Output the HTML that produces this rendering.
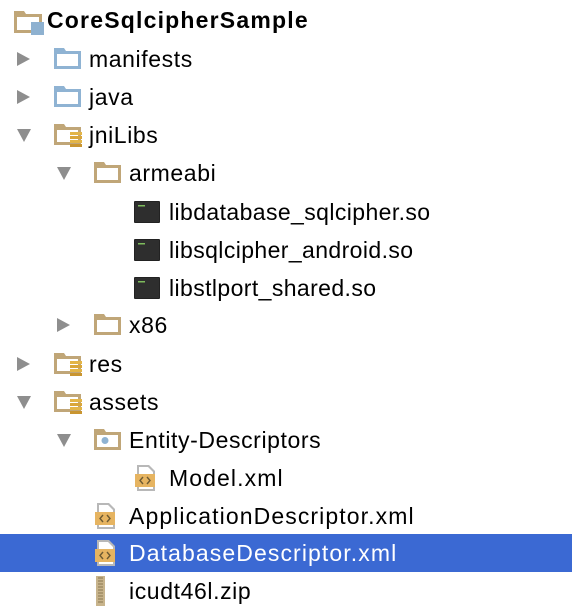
<!DOCTYPE html>
<html><head><meta charset="utf-8"><style>
body{margin:0;width:572px;height:616px;background:#fff;position:relative;overflow:hidden;font-family:"Liberation Sans",sans-serif;font-size:23px;letter-spacing:0.6px;color:#000}
.r{position:absolute;left:0;width:572px;height:38px}
.t{position:absolute;top:6px;line-height:26px;white-space:nowrap}
svg{position:absolute}
.sel{background:#3b69d3;color:#fff}
.w{letter-spacing:1.1px}
</style></head><body>
<svg width="0" height="0" style="position:absolute">
<defs>
<g id="ft"><path d="M0 0H10L12 3H27V21H0Z" fill="#c0a678"/><rect x="3" y="6" width="21" height="12" fill="#fff"/></g>
<g id="fb"><path d="M0 0H10L12 3H27V21H0Z" fill="#8fb3d3"/><rect x="3" y="6" width="21" height="12" fill="#fff"/></g>
<g id="db"><rect x="0" y="0" width="12" height="3" fill="#e3b547"/><rect x="0" y="4" width="12" height="3" fill="#d9a63a"/><rect x="0" y="8" width="12" height="3" fill="#e3b547"/><rect x="0" y="12" width="12" height="3" fill="#c99530"/></g>
<g id="so"><rect x="0" y="0" width="26" height="22" rx="1" fill="#222"/><rect x="1" y="1" width="24" height="20" fill="#2e2e2e"/><rect x="4" y="4" width="7" height="1.5" fill="#7dbb5c"/></g>
<g id="xml"><path d="M2 0H14L20 6V26H2Z" fill="#b8b8b8"/><path d="M4 2H13L18 7V24H4Z" fill="#fff"/><rect x="0" y="9" width="20" height="13" fill="#e6b461"/><path d="M8 12L5 15.5L8 19M12 12L15 15.5L12 19" stroke="#6d5a33" stroke-width="1.4" fill="none"/></g>
<g id="tr"><path d="M0 0L13 7L0 14Z" fill="#8e8e8e"/></g>
<g id="td"><path d="M0 0H14L7 13Z" fill="#8e8e8e"/></g>
</defs></svg>

<div class="r" style="top:1px">
<svg x="0" width="50" height="38"><path d="M14 10H24L26 13H42V32H14Z" fill="#c0a678"/><rect x="17" y="16" width="22" height="13" fill="#fff"/><rect x="31" y="21" width="13" height="13" fill="#8eb1d0"/></svg>
<div class="t" style="left:47px;font-weight:bold;letter-spacing:1.2px">CoreSqlcipherSample</div></div>

<div class="r" style="top:40px"><svg width="200" height="38"><use href="#tr" x="17" y="12"/><use href="#fb" x="54" y="8"/></svg><div class="t" style="left:89px">manifests</div></div>
<div class="r" style="top:78px"><svg width="200" height="38"><use href="#tr" x="17" y="12"/><use href="#fb" x="54" y="8"/></svg><div class="t" style="left:89px">java</div></div>
<div class="r" style="top:116px"><svg width="200" height="38"><use href="#td" x="17" y="13"/><use href="#ft" x="54" y="8"/><use href="#db" x="70" y="16"/></svg><div class="t" style="left:89px">jniLibs</div></div>
<div class="r" style="top:154px"><svg width="200" height="38"><use href="#td" x="57" y="13"/><use href="#ft" x="94" y="8"/></svg><div class="t" style="left:129px">armeabi</div></div>
<div class="r" style="top:193px"><svg width="200" height="38"><use href="#so" x="134" y="8"/></svg><div class="t" style="left:169px;letter-spacing:0.4px">libdatabase_sqlcipher.so</div></div>
<div class="r" style="top:231px"><svg width="200" height="38"><use href="#so" x="134" y="8"/></svg><div class="t" style="left:169px;letter-spacing:0.4px">libsqlcipher_android.so</div></div>
<div class="r" style="top:269px"><svg width="200" height="38"><use href="#so" x="134" y="8"/></svg><div class="t" style="left:169px;letter-spacing:0.4px">libstlport_shared.so</div></div>
<div class="r" style="top:306px"><svg width="200" height="38"><use href="#tr" x="57" y="12"/><use href="#ft" x="94" y="8"/></svg><div class="t" style="left:129px">x86</div></div>
<div class="r" style="top:345px"><svg width="200" height="38"><use href="#tr" x="17" y="12"/><use href="#ft" x="54" y="8"/><use href="#db" x="70" y="16"/></svg><div class="t" style="left:89px">res</div></div>
<div class="r" style="top:383px"><svg width="200" height="38"><use href="#td" x="17" y="13"/><use href="#ft" x="54" y="8"/><use href="#db" x="70" y="16"/></svg><div class="t" style="left:89px">assets</div></div>
<div class="r" style="top:421px"><svg width="200" height="38"><use href="#td" x="57" y="13"/><use href="#ft" x="94" y="8"/><circle cx="105" cy="19.5" r="3.5" fill="#8fb3d3"/></svg><div class="t" style="left:129px">Entity-Descriptors</div></div>
<div class="r" style="top:459px"><svg width="200" height="38"><use href="#xml" x="135" y="6"/></svg><div class="t w" style="left:169px">Model.xml</div></div>
<div class="r" style="top:497px"><svg width="200" height="38"><use href="#xml" x="95" y="6"/></svg><div class="t w" style="left:129px">ApplicationDescriptor.xml</div></div>
<div class="r sel" style="top:534px"><svg width="200" height="38"><use href="#xml" x="95" y="6"/></svg><div class="t w" style="left:129px">DatabaseDescriptor.xml</div></div>
<div class="r" style="top:572px"><svg width="200" height="38"><rect x="96" y="4" width="9" height="30" fill="#c8b48c"/><path d="M98 6h5M98 9h5M98 12h5M98 15h5M98 18h5M98 21h5M98 24h5M98 27h5M98 30h5" stroke="#8a7850" stroke-width="1"/></svg><div class="t" style="left:129px">icudt46l.zip</div></div>
</body></html>
